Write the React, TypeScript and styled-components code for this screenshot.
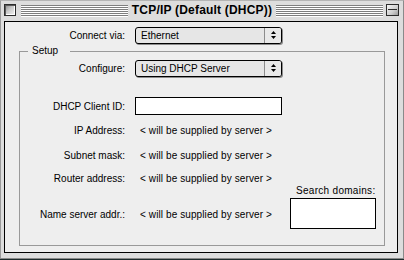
import React from 'react';
import styled, { createGlobalStyle } from 'styled-components';

const GlobalStyle = createGlobalStyle`
  html, body {
    margin: 0;
    padding: 0;
    background: #1d2b2b;
  }
  body {
    font-family: 'Liberation Sans', Arial, sans-serif;
    font-size: 10px;
    color: #000;
  }
  * {
    box-sizing: border-box;
  }
`;

const Window = styled.div`
  width: 404px;
  height: 259px;
  display: flex;
  flex-direction: column;
  background: #dddddd;
  border: 1px solid #8a8a8a;
  border-top-color: #b4b4b4;
  border-left-color: #9a9a9a;
`;

const TitleBar = styled.div`
  height: 20px;
  padding: 0 4px 2px 3px;
  display: flex;
  align-items: center;
`;

const CloseBox = styled.div`
  width: 12px;
  height: 12px;
  flex: none;
  border: 1px solid #2c2c2c;
  background: linear-gradient(135deg, #8a8a8a 0%, #c9c9c9 45%, #f4f4f4 100%);
  box-shadow: inset 1px 1px 0 #5a5a5a, inset -1px -1px 0 #ffffff;
  margin-right: 5px;
`;

const ZoomBox = styled.div`
  position: relative;
  width: 13px;
  height: 12px;
  flex: none;
  border: 1px solid #2c2c2c;
  background: linear-gradient(135deg, #f4f4f4 0%, #cfcfcf 60%, #9a9a9a 100%);
  margin-left: 3px;

  &::after {
    content: '';
    position: absolute;
    left: 1px;
    right: 1px;
    top: 4px;
    height: 1px;
    background: #2c2c2c;
  }
`;

const Stripes = styled.div`
  flex: 1;
  height: 12px;
  margin-top: 1px;
  background: repeating-linear-gradient(
    to bottom,
    #7e7e7e 0,
    #7e7e7e 1px,
    #ffffff 1px,
    #ffffff 2px
  );
`;

const Title = styled.div`
  flex: none;
  padding: 0 4px;
  font-size: 12px;
  font-weight: bold;
  letter-spacing: 0.2px;
  line-height: 14px;
`;

const Frame = styled.div`
  flex: 1;
  display: flex;
  padding: 0 5px 5px 3px;
`;

const Content = styled.div`
  flex: 1;
  display: flex;
  flex-direction: column;
  padding-top: 5px;
  background: #eeeeee;
  border: 1px solid #000;
`;

const Row = styled.div<{ $height: number; $top?: number }>`
  display: flex;
  align-items: center;
  gap: 10px;
  height: ${(p) => p.$height}px;
  margin-top: ${(p) => p.$top ?? 0}px;
`;

const Label = styled.div<{ $width: number }>`
  width: ${(p) => p.$width}px;
  flex: none;
  text-align: right;
  white-space: nowrap;
`;

const Value = styled.div`
  padding-left: 5px;
  white-space: nowrap;
  letter-spacing: 0.1px;
`;

const Popup = styled.div`
  width: 147px;
  height: 17px;
  display: flex;
  align-items: stretch;
  border: 1px solid #000;
  border-radius: 3px;
  background: #e6e6e6;
  box-shadow: 1px 1px 0 #8c8c8c;
`;

const PopupText = styled.div`
  flex: 1;
  padding-left: 5px;
  line-height: 15px;
  white-space: nowrap;
`;

const PopupArrows = styled.div`
  width: 17px;
  display: flex;
  align-items: center;
  justify-content: center;
  border-left: 1px solid #8c8c8c;
  background: #e9e9e9;
  border-radius: 0 2px 2px 0;
`;

const TextField = styled.div<{ $width: number; $height: number }>`
  width: ${(p) => p.$width}px;
  height: ${(p) => p.$height}px;
  background: #fff;
  border: 1px solid #000;
`;

const Group = styled.fieldset`
  flex: 1;
  min-width: 0;
  margin: 1px 12px 6px 14px;
  padding: 0;
  border: 1px solid #999999;
`;

const Legend = styled.legend`
  margin-left: 8px;
  padding: 0 12px 0 4px;
  line-height: 12px;
  font-size: 10px;
`;

const GroupBody = styled.div`
  display: flex;
  flex-direction: column;
  padding-top: 3px;
`;

const LastRow = styled.div`
  display: flex;
  align-items: flex-end;
`;

const SearchColumn = styled.div`
  margin-left: auto;
  margin-right: 8px;
  display: flex;
  flex-direction: column;
  align-items: center;
  gap: 1px;
`;

const SearchLabel = styled.div`
  width: 85px;
  text-align: right;
  line-height: 12px;
  white-space: nowrap;
  letter-spacing: 0.3px;
`;

const Arrows = () => (
  <svg width="5" height="9" viewBox="0 0 5 9">
    <polygon points="0,3 5,3 2.5,0" fill="#000" />
    <polygon points="0,5 5,5 2.5,8" fill="#000" />
  </svg>
);

const Select = ({ value }: { value: string }) => (
  <Popup>
    <PopupText>{value}</PopupText>
    <PopupArrows>
      <Arrows />
    </PopupArrows>
  </Popup>
);

const supplied = '< will be supplied by server >';

const App = () => (
  <>
    <GlobalStyle />
    <Window>
      <TitleBar>
        <CloseBox />
        <Stripes />
        <Title>TCP/IP (Default (DHCP))</Title>
        <Stripes />
        <ZoomBox />
      </TitleBar>
      <Frame>
        <Content>
          <Row $height={17}>
            <Label $width={120}>Connect via:</Label>
            <Select value="Ethernet" />
          </Row>
          <Group>
            <Legend>Setup</Legend>
            <GroupBody>
              <Row $height={17}>
                <Label $width={105}>Configure:</Label>
                <Select value="Using DHCP Server" />
              </Row>
              <Row $height={18} $top={20}>
                <Label $width={105}>DHCP Client ID:</Label>
                <TextField $width={147} $height={18} />
              </Row>
              <Row $height={16} $top={7}>
                <Label $width={105}>IP Address:</Label>
                <Value>{supplied}</Value>
              </Row>
              <Row $height={16} $top={9}>
                <Label $width={105}>Subnet mask:</Label>
                <Value>{supplied}</Value>
              </Row>
              <Row $height={14} $top={8}>
                <Label $width={105}>Router address:</Label>
                <Value>{supplied}</Value>
              </Row>
              <LastRow>
                <Row $height={30}>
                  <Label $width={105}>Name server addr.:</Label>
                  <Value>{supplied}</Value>
                </Row>
                <SearchColumn>
                  <SearchLabel>Search domains:</SearchLabel>
                  <TextField $width={86} $height={31} />
                </SearchColumn>
              </LastRow>
            </GroupBody>
          </Group>
        </Content>
      </Frame>
    </Window>
  </>
);

export default App;
